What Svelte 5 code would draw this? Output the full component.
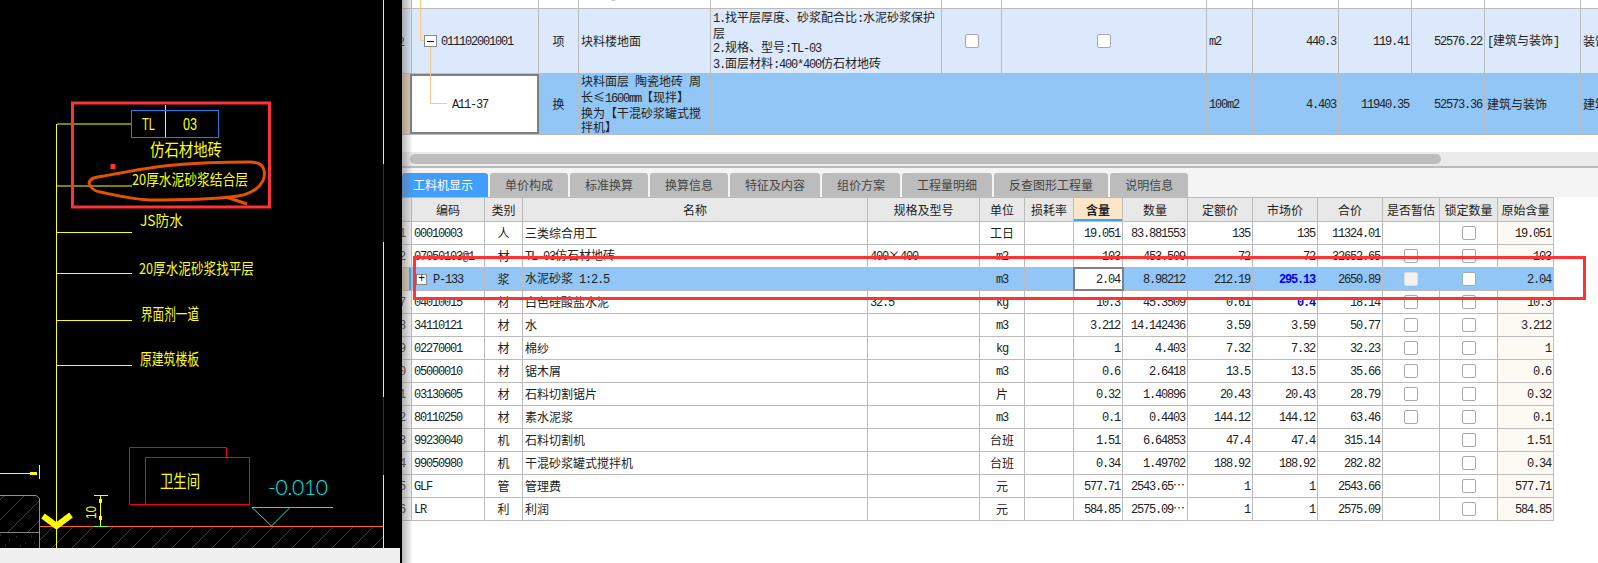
<script>
  // split mixed text so ascii runs get the half-width mono look
  const runs = (s) => s.split(/([\x20-\x7e]+)/).filter(Boolean).map((t) => ({ t, ascii: /^[\x20-\x7e]/.test(t) }));

  const tabs = ['工料机显示', '单价构成', '标准换算', '换算信息', '特征及内容', '组价方案', '工程量明细', '反查图形工程量', '说明信息'];

  const heads = ['编码', '类别', '名称', '规格及型号', '单位', '损耗率', '含量', '数量', '定额价', '市场价', '合价', '是否暂估', '锁定数量', '原始含量'];

  // est: 0 none, 1 checkbox, 2 disabled
  const rows = [
    { no: '1', code: '00010003', kind: '人', name: '三类综合用工', spec: '', unit: '工日', rate: '19.051', qty: '83.881553', base: '135', market: '135', total: '11324.01', est: 0 },
    { no: '2', code: '07050103@1', kind: '材', name: 'TL-03仿石材地砖', spec: '400×400', unit: 'm2', rate: '103', qty: '453.509', base: '72', market: '72', total: '32652.65', est: 1 },
    { no: '3', code: 'P-133', kind: '浆', name: '水泥砂浆 1:2.5', spec: '', unit: 'm3', rate: '2.04', qty: '8.98212', base: '212.19', market: '295.13', total: '2650.89', est: 2, selected: true, changed: true },
    { no: '7', code: '04010015', kind: '材', name: '白色硅酸盐水泥', spec: '32.5', unit: 'kg', rate: '10.3', qty: '45.3509', base: '0.61', market: '0.4', total: '18.14', est: 1, changed: true },
    { no: '8', code: '34110121', kind: '材', name: '水', spec: '', unit: 'm3', rate: '3.212', qty: '14.142436', base: '3.59', market: '3.59', total: '50.77', est: 1 },
    { no: '9', code: '02270001', kind: '材', name: '棉纱', spec: '', unit: 'kg', rate: '1', qty: '4.403', base: '7.32', market: '7.32', total: '32.23', est: 1 },
    { no: '10', code: '05000010', kind: '材', name: '锯木屑', spec: '', unit: 'm3', rate: '0.6', qty: '2.6418', base: '13.5', market: '13.5', total: '35.66', est: 1 },
    { no: '11', code: '03130605', kind: '材', name: '石料切割锯片', spec: '', unit: '片', rate: '0.32', qty: '1.40896', base: '20.43', market: '20.43', total: '28.79', est: 1 },
    { no: '12', code: '80110250', kind: '材', name: '素水泥浆', spec: '', unit: 'm3', rate: '0.1', qty: '0.4403', base: '144.12', market: '144.12', total: '63.46', est: 1 },
    { no: '13', code: '99230040', kind: '机', name: '石料切割机', spec: '', unit: '台班', rate: '1.51', qty: '6.64853', base: '47.4', market: '47.4', total: '315.14', est: 0 },
    { no: '14', code: '99050980', kind: '机', name: '干混砂浆罐式搅拌机', spec: '', unit: '台班', rate: '0.34', qty: '1.49702', base: '188.92', market: '188.92', total: '282.82', est: 0 },
    { no: '15', code: 'GLF', kind: '管', name: '管理费', spec: '', unit: '元', rate: '577.71', qty: '2543.65…', base: '1', market: '1', total: '2543.66', est: 0 },
    { no: '16', code: 'LR', kind: '利', name: '利润', spec: '', unit: '元', rate: '584.85', qty: '2575.09…', base: '1', market: '1', total: '2575.09', est: 0 }
  ];

  const labels = [
    { x: 150, y: 156, w: 72, size: 17, text: '仿石材地砖' },
    { x: 132, y: 185, w: 116, size: 15, text: '20厚水泥砂浆结合层' },
    { x: 140, y: 226, w: 43, size: 15, text: 'JS防水' },
    { x: 139, y: 274, w: 115, size: 15, text: '20厚水泥砂浆找平层' },
    { x: 141, y: 320, w: 58, size: 16, text: '界面剂一道' },
    { x: 140, y: 365, w: 59, size: 16, text: '原建筑楼板' },
    { x: 160, y: 488, w: 40, size: 18, text: '卫生间' }
  ];

  const leaders = [124, 186, 232.5, 273.5, 320.5, 365.5];
</script>

{#snippet txt(s)}
  <span class="txt">{#each runs(s) as r}{#if r.ascii}<span class="n">{r.t}</span>{:else}{r.t}{/if}{/each}</span>
{/snippet}

{#snippet box(kind)}
  <span class="check" class:off={kind === 2}></span>
{/snippet}

<div class="page">
  <aside class="cad">
    <svg class="drawing" width="402" height="548" viewBox="0 0 402 548">
      <defs>
        <pattern id="hatch" width="20" height="20" patternUnits="userSpaceOnUse">
          <path d="M-2 22 L22 -2" stroke="#3c3c3c" stroke-width="1" />
        </pattern>
      </defs>
      <rect x="39" y="527" width="344" height="21" fill="url(#hatch)" />
      <rect x="0" y="496" width="39" height="36" fill="url(#hatch)" />
      <path d="M0 535h1M9 540h1M16 537h1M25 543h1M31 536h1M5 545h1M20 546h1M34 543h1" stroke="#555" />
      <path d="M0 532.5H39" stroke="#808080" />
      <path d="M0 495.5H36L39.5 498.5V548" fill="none" stroke="#e08020" />
      <path d="M39 526.5H383" stroke="#ff6a00" />

      <g stroke="#ffff00" fill="none">
        <path d="M56.5 124V548" />
        {#each leaders as y}
          <path d="M57 {y}H132" />
        {/each}
        <path d="M383.5 0V164M383.5 242V397M383.5 475V548" />
        <path d="M165.5 105V137" />
        <path d="M0 473.5H37M39.5 465V479" />
        <path d="M30 473.5H37" stroke-width="3" />
        <path d="M100.5 495V526M94 495.5H108" />
        <path d="M100.5 499V503M100.5 516V520" stroke-width="3" />
        <path d="M43 516L56.5 526L71 515" stroke-width="6" />
      </g>
      <path d="M383.5 164V242M383.5 397V475" stroke="#333" />
      <path d="M94 526.5H108" stroke="#66ff33" />

      <rect x="131.5" y="110.5" width="87" height="27" fill="none" stroke="#1e7fe0" />
      <text class="cad-latin" x="142" y="130" font-size="16" textLength="13" lengthAdjust="spacingAndGlyphs">TL</text>
      <text class="cad-latin" x="183" y="130" font-size="16" textLength="14" lengthAdjust="spacingAndGlyphs">03</text>

      {#each labels as l}
        <text class="cad-text" x={l.x} y={l.y} font-size={l.size} textLength={l.w} lengthAdjust="spacingAndGlyphs">{l.text}</text>
      {/each}
      <text class="cad-latin" transform="translate(95.5 519) rotate(-90)" font-size="15" textLength="13" lengthAdjust="spacingAndGlyphs">10</text>

      <path d="M129.5 504.5V447.5H226.5V457.5" fill="none" stroke="#ff0000" />
      <path d="M129.5 504.5H145.5" stroke="#ff0000" />
      <rect x="145.5" y="457.5" width="104" height="47" fill="none" stroke="#ff0000" />

      <path d="M252 507.5H333M252 507.5L271.5 526L290 507.5" fill="none" stroke="#22dddd" />
      <text class="cad-level" x="268" y="495" font-size="21" textLength="60" lengthAdjust="spacing">-0.010</text>

      <!-- markup drawn on top of the drawing -->
      <rect x="72.5" y="103" width="197" height="104" fill="none" stroke="#ff3333" stroke-width="3" />
      <rect x="110.5" y="164" width="5" height="5" fill="#ff3333" />
      <path d="M89 183C90 178 96 177 104 176C125 172 150 167 175 165C205 162 235 162 250 162C258 162 263 165 264 170C266 178 262 184 256 189C248 195 240 196 230 197C205 200 180 200 150 200C130 199 115 195 100 192C94 191 90 187 89 183ZM226 197L247 204" fill="none" stroke="#e65100" stroke-width="3" />
    </svg>
    <div class="cad-foot"></div>
  </aside>

  <main class="sheet">
    <section class="upper">
      <div class="up-row stub">
        <div class="cell num"></div>
        <div class="cell"></div>
        <div class="cell"></div>
        <div class="cell clip">{@render txt('1:2.5】')}</div>
        {#each Array(9) as _}
          <div class="cell"></div>
        {/each}
      </div>

      <div class="up-row parent">
        <div class="cell num right">2</div>
        <div class="cell code-top">{@render txt('011102001001')}</div>
        <div class="cell mid">项</div>
        <div class="cell pad">块料楼地面</div>
        <div class="cell pad">{@render txt('1.找平层厚度、砂浆配合比:水泥砂浆保护\n层\n2.规格、型号:TL-03\n3.面层材料:400*400仿石材地砖')}</div>
        <div class="cell mid">{@render box(1)}</div>
        <div class="cell mid">{@render box(1)}</div>
        <div class="cell pad">{@render txt('m2')}</div>
        <div class="cell value">{@render txt('440.3')}</div>
        <div class="cell value">{@render txt('119.41')}</div>
        <div class="cell value">{@render txt('52576.22')}</div>
        <div class="cell pad">{@render txt('[建筑与装饰]')}</div>
        <div class="cell pad">装饰工程</div>
      </div>

      <div class="up-row child">
        <div class="cell num tan"></div>
        <div class="cell code-sub">{@render txt('A11-37')}</div>
        <div class="cell mid">换</div>
        <div class="cell pad">{@render txt('块料面层 陶瓷地砖 周\n长≤1600mm【现拌】\n换为【干混砂浆罐式搅\n拌机】')}</div>
        <div class="cell"></div>
        <div class="cell"></div>
        <div class="cell"></div>
        <div class="cell pad">{@render txt('100m2')}</div>
        <div class="cell value">{@render txt('4.403')}</div>
        <div class="cell value">{@render txt('11940.35')}</div>
        <div class="cell value">{@render txt('52573.36')}</div>
        <div class="cell pad">建筑与装饰</div>
        <div class="cell pad">建筑工程</div>
      </div>
    </section>

    <div class="scroll"><div class="thumb"></div></div>

    <nav class="tabs">
      {#each tabs as tab, i}
        <div class="tab" class:active={i === 0}>{tab}</div>
      {/each}
    </nav>

    <section class="lower">
      <div class="lo-row head">
        <div class="cell num"></div>
        {#each heads as h}
          <div class="cell mid" class:sorted={h === '含量'}>{h}</div>
        {/each}
      </div>

      {#each rows as r}
        <div class="lo-row" class:selected={r.selected}>
          <div class="cell num right">{@render txt(r.no)}</div>
          <div class="cell code" class:strip={r.selected}>
            {#if r.selected}<span class="plus">+</span>{/if}
            {@render txt(r.code)}
          </div>
          <div class="cell mid">{r.kind}</div>
          <div class="cell pad">{@render txt(r.name)}</div>
          <div class="cell pad">{@render txt(r.spec)}</div>
          <div class="cell mid">{@render txt(r.unit)}</div>
          <div class="cell"></div>
          <div class="cell value" class:editing={r.selected}>{@render txt(r.rate)}</div>
          <div class="cell value">{@render txt(r.qty)}</div>
          <div class="cell value">{@render txt(r.base)}</div>
          <div class="cell value" class:changed={r.changed}>{@render txt(r.market)}</div>
          <div class="cell value">{@render txt(r.total)}</div>
          <div class="cell mid">{#if r.est}{@render box(r.est)}{/if}</div>
          <div class="cell mid">{@render box(1)}</div>
          <div class="cell value origin">{@render txt(r.rate)}</div>
        </div>
      {/each}
    </section>

    <!-- tree connector lines and the plus/minus box of the upper table -->
    <span class="tree line-a"></span>
    <span class="tree line-a2"></span>
    <span class="tree line-b"></span>
    <span class="tree line-b2"></span>
    <span class="minus"></span>

    <div class="edge-shadow"></div>
    <div class="markup"></div>
  </main>
</div>

<style>
  :global(body) {
    margin: 0;
    background: #fff;
    overflow: hidden;
  }

  .page {
    display: flex;
    width: 1598px;
    height: 563px;
    overflow: hidden;
    font-family: "Noto Sans CJK SC", "Liberation Sans", sans-serif;
    font-size: 12px;
    color: #222;
  }

  .cad {
    flex: 0 0 402px;
    display: flex;
    flex-direction: column;
    background: #000;
  }

  .drawing {
    display: block;
  }

  .cad-foot {
    flex: 1;
    margin-right: 2px;
    background: #f0f0f0;
  }

  .cad-text {
    fill: #ffff00;
    font-family: "Noto Sans CJK SC", sans-serif;
  }

  .cad-latin {
    fill: #ffff00;
    font-family: "Liberation Sans", sans-serif;
  }

  .cad-level {
    fill: #00eeee;
    font-family: Lato, "Liberation Sans", sans-serif;
    font-weight: 300;
  }

  .sheet {
    position: relative;
    flex: 1;
    min-width: 0;
    overflow: hidden;
    display: flex;
    flex-direction: column;
  }

  .upper {
    height: 152px;
  }

  .up-row,
  .lo-row {
    display: grid;
    border-bottom: 1px solid #bbb;
    box-sizing: border-box;
  }

  .up-row {
    width: 1258px;
    grid-template-columns: 10px 127px 40px 132px 231px 60px 205px 46px 86px 73px 73px 96px 79px;
  }

  .stub {
    height: 9px;
  }

  .parent {
    height: 65px;
    background: #dce9fc;
  }

  .child {
    height: 61px;
    background: #91c6f6;
  }

  .lo-row {
    width: 1152px;
    height: 23px;
    grid-template-columns: 10px 73px 38px 345px 112px 45px 49px 49px 65px 65px 65px 65px 57px 58px 56px;
  }

  .cell {
    display: flex;
    align-items: center;
    min-width: 0;
    overflow: hidden;
    box-sizing: border-box;
    border-right: 1px solid #bbb;
    line-height: 14px;
    white-space: nowrap;
  }

  .txt {
    white-space: pre-wrap;
  }

  .n {
    font-family: "Liberation Mono", monospace;
    font-size: 12px;
    letter-spacing: -1.2px;
  }

  .num {
    justify-content: flex-end;
    padding-right: 6px;
    background: #f4f4f4;
  }

  .num.right {
    color: #333;
  }

  .parent .num {
    background: #dce9fc;
  }

  .num.tan,
  .selected .num {
    background: #e3ceb0;
    color: transparent;
  }

  .selected .num .n {
    color: transparent;
  }

  .mid {
    justify-content: center;
  }

  .pad {
    padding: 0 2px;
  }

  .value {
    justify-content: flex-end;
    padding-right: 2px;
  }

  .clip {
    align-items: flex-end;
    padding-left: 2px;
    line-height: 12px;
  }

  .clip .txt {
    white-space: nowrap;
    margin-bottom: 5px;
  }

  .code {
    padding-left: 2px;
  }

  .code-top {
    padding-left: 29px;
  }

  .code-sub {
    margin-left: -2px;
    padding-left: 42px;
    background: #fff;
    border-right: 0;
    box-shadow: inset 0 0 0 2px #808080, inset 2px 0 0 #409eff;
  }

  .check {
    display: block;
    width: 14px;
    height: 14px;
    box-sizing: border-box;
    background: #fff;
    border: 1px solid #a8a8a8;
    border-radius: 2px;
  }

  .check.off {
    background: #f2f2f2;
    border-color: #ddd;
  }

  .scroll {
    height: 14px;
    background: #ebebeb;
    padding: 2px 0 2px 8px;
    box-sizing: border-box;
  }

  .thumb {
    width: 1031px;
    height: 10px;
    background: #bdbdbd;
    border-radius: 5px;
  }

  .tabs {
    display: flex;
    gap: 2px;
    height: 31px;
    box-sizing: border-box;
    padding-top: 5px;
    background: #f4f4f4;
    border-top: 2px solid #bbb;
  }

  .tab {
    padding: 0 15px;
    height: 24px;
    line-height: 24px;
    background: #bcbcbc;
    color: #444;
    border-radius: 3px 3px 0 0;
  }

  .tab.active {
    padding-left: 11px;
    background: #409eff;
    color: #fff;
  }

  .head {
    height: 25px;
    border-top: 1px solid #bbb;
    background: #e8e8e8;
  }

  .head .num {
    background: #e8e8e8;
  }

  .sorted {
    font-weight: 700;
    background: #fde6c8;
    box-shadow: inset 0 -2px 0 #409eff;
  }

  .origin {
    background: #fdf9f3;
  }

  .selected {
    background: #91c6f6;
  }

  .selected .origin {
    background: transparent;
  }

  .strip {
    padding-left: 4px;
    gap: 6px;
  }

  .selected .num {
    box-shadow: inset -2px 0 0 #409eff;
  }

  .plus {
    display: block;
    flex: none;
    width: 11px;
    height: 11px;
    box-sizing: border-box;
    background: #fff;
    border: 1px solid #888;
    font-family: "Liberation Mono", monospace;
    font-size: 12px;
    line-height: 8px;
    text-align: center;
    color: #111;
  }

  .editing {
    background: #fff;
    outline: 2px solid #808080;
    outline-offset: -1px;
  }

  .changed .n {
    font-weight: 700;
    color: #0000f0;
  }

  .tree {
    position: absolute;
    background: #ffc68a;
  }

  .line-a {
    left: 18px;
    top: 0;
    width: 1px;
    height: 40px;
  }

  .line-a2 {
    left: 18px;
    top: 40px;
    width: 5px;
    height: 1px;
  }

  .line-b {
    left: 28px;
    top: 46px;
    width: 1px;
    height: 57px;
  }

  .line-b2 {
    left: 28px;
    top: 103px;
    width: 17px;
    height: 1px;
  }

  .minus {
    position: absolute;
    left: 22px;
    top: 35px;
    width: 13px;
    height: 12px;
    box-sizing: border-box;
    background: linear-gradient(#111, #111) center / 7px 1px no-repeat, #fff;
    border: 1px solid #888;
  }

  .edge-shadow {
    position: absolute;
    left: 0;
    top: 0;
    bottom: 0;
    width: 11px;
    background: linear-gradient(90deg, rgba(110, 110, 110, 0.5), rgba(170, 170, 170, 0));
    pointer-events: none;
  }

  .markup {
    position: absolute;
    left: 11px;
    top: 256px;
    width: 1173px;
    height: 44px;
    box-sizing: border-box;
    border: 3px solid #ff3333;
    pointer-events: none;
  }
</style>
